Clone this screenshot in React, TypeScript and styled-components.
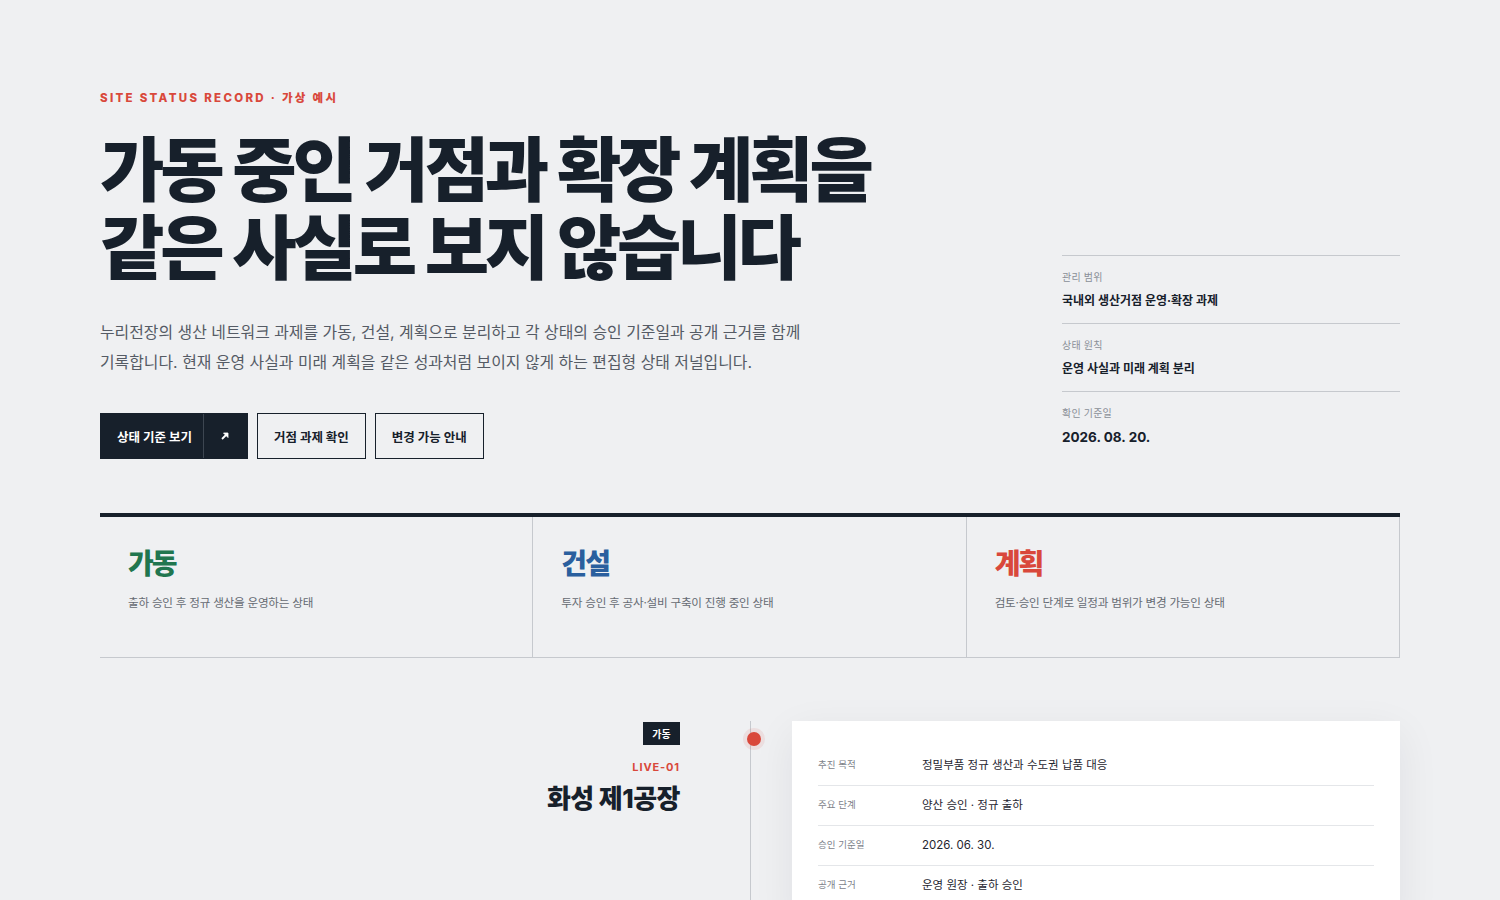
import React from 'react';
import styled, { createGlobalStyle } from 'styled-components';

const GlobalStyle = createGlobalStyle`
  * { box-sizing: border-box; }
  html, body { margin: 0; padding: 0; }
  body {
    background: #eff0f2;
    color: #17202b;
    font-family: "Inter", "Noto Sans CJK KR", sans-serif;
  }
`;

const ink = '#17202b';
const red = '#d9483b';
const sans = '"Inter", "Noto Sans CJK KR", sans-serif';

const Page = styled.main`
  width: 1300px;
  margin: 0 auto;
  padding-top: 90px;
`;

const Hero = styled.section`
  display: grid;
  grid-template-columns: 1fr 338px;
  align-items: end;
`;

const Eyebrow = styled.div`
  font-family: ${sans};
  font-size: 11.5px;
  font-weight: 800;
  letter-spacing: 0.2em;
  color: ${red};
  line-height: 16px;
`;

const Headline = styled.h1`
  margin: 21px 0 0;
  font-family: "Noto Sans CJK KR", sans-serif;
  font-size: 70px;
  font-weight: 800;
  line-height: 78px;
  letter-spacing: -0.06em;
  color: ${ink};
`;

const Lead = styled.p`
  margin: 35px 0 0;
  max-width: 712px;
  font-family: ${sans};
  font-size: 15.9px;
  line-height: 30px;
  color: #555b65;
`;

const Actions = styled.div`
  display: flex;
  gap: 9px;
  margin-top: 35px;
`;

const Button = styled.a<{ $primary?: boolean }>`
  display: inline-flex;
  align-items: center;
  height: 46px;
  padding: ${(p) => (p.$primary ? '0' : '0 16px')};
  border: 1px solid ${ink};
  background: ${(p) => (p.$primary ? ink : 'transparent')};
  color: ${(p) => (p.$primary ? '#fff' : ink)};
  font-family: ${sans};
  font-size: 12.5px;
  font-weight: 700;
  text-decoration: none;
`;

const ButtonLabel = styled.span`
  padding: 0 11px 0 16px;
`;

const ButtonArrow = styled.span`
  display: flex;
  align-items: center;
  justify-content: center;
  width: 44px;
  height: 100%;
  border-left: 1px solid #3d4651;
`;

const Meta = styled.dl`
  margin: 0 0 12px;
`;

const MetaItem = styled.div`
  border-top: 1px solid #c6c9ce;
  padding: 14px 0 12px;
  &:last-child { padding-bottom: 0; }
`;

const MetaLabel = styled.dt`
  font-family: ${sans};
  font-size: 10px;
  line-height: 14px;
  letter-spacing: 0.02em;
  color: #8a8f97;
`;

const MetaValue = styled.dd<{ $num?: boolean }>`
  margin: 7px 0 0;
  font-family: ${sans};
  font-size: ${(p) => (p.$num ? '13.5px' : '12px')};
  font-weight: 700;
  line-height: 20px;
  color: ${ink};
`;

const StatusBand = styled.section`
  display: grid;
  grid-template-columns: repeat(3, 1fr);
  margin-top: 54px;
  border-top: 4px solid ${ink};
  border-bottom: 1px solid #c6c9ce;
`;

const StatusCell = styled.div`
  height: 140px;
  padding: 28px 28px 0;
  border-right: 1px solid #c6c9ce;
`;

const StatusTitle = styled.h2<{ $color: string }>`
  margin: 0;
  font-family: "Noto Sans CJK KR", sans-serif;
  font-size: 28px;
  font-weight: 800;
  line-height: 34px;
  letter-spacing: -0.07em;
  color: ${(p) => p.$color};
`;

const StatusDesc = styled.p`
  margin: 15px 0 0;
  font-family: ${sans};
  font-size: 11.6px;
  line-height: 18px;
  color: #666b73;
  letter-spacing: -0.02em;
`;

const Timeline = styled.section`
  display: grid;
  grid-template-columns: 580px 112px 1fr;
  margin-top: 63px;
`;

const SiteHead = styled.div`
  display: flex;
  flex-direction: column;
  align-items: flex-end;
  padding-top: 1px;
`;

const Tag = styled.span`
  display: inline-flex;
  align-items: center;
  justify-content: center;
  width: 37px;
  height: 23px;
  background: ${ink};
  color: #fff;
  font-family: ${sans};
  font-size: 10px;
  font-weight: 700;
`;

const Code = styled.div`
  margin-top: 15px;
  font-family: "Inter", sans-serif;
  font-size: 11px;
  font-weight: 700;
  letter-spacing: 0.08em;
  line-height: 14px;
  color: ${red};
`;

const SiteName = styled.h3`
  margin: 8px 0 0;
  font-family: ${sans};
  font-size: 26px;
  font-weight: 800;
  line-height: 34px;
  letter-spacing: -0.02em;
  color: ${ink};
`;

const Rail = styled.div`
  position: relative;
  margin-left: 70px;
  width: 1px;
  min-height: 200px;
  background: #c6c9ce;
`;

const Dot = styled.span`
  position: absolute;
  left: -3px;
  top: 11px;
  width: 14px;
  height: 14px;
  border-radius: 50%;
  background: ${red};
  box-shadow: 0 0 0 4px rgba(217, 72, 59, 0.1);
`;

const Card = styled.div`
  background: #fff;
  padding: 25px 26px 10px;
  box-shadow: 0 12px 40px rgba(23, 32, 43, 0.07);
`;

const Row = styled.div`
  display: grid;
  grid-template-columns: 104px 1fr;
  align-items: start;
  height: 40px;
  padding-top: 12px;
  border-bottom: 1px solid #e4e6e9;
  &:last-child { border-bottom: none; }
`;

const RowLabel = styled.span`
  font-family: ${sans};
  font-size: 9.5px;
  line-height: 14px;
  color: #7d828a;
`;

const RowValue = styled.span`
  font-family: ${sans};
  font-size: 11.5px;
  line-height: 14px;
  color: #1f2630;
`;

const meta = [
  { label: '관리 범위', value: '국내외 생산거점 운영·확장 과제' },
  { label: '상태 원칙', value: '운영 사실과 미래 계획 분리' },
  { label: '확인 기준일', value: '2026. 08. 20.', num: true },
];

const statuses = [
  { title: '가동', color: '#21764f', desc: '출하 승인 후 정규 생산을 운영하는 상태' },
  { title: '건설', color: '#2a5f9e', desc: '투자 승인 후 공사·설비 구축이 진행 중인 상태' },
  { title: '계획', color: '#d9483b', desc: '검토·승인 단계로 일정과 범위가 변경 가능인 상태' },
];

const rows = [
  { label: '추진 목적', value: '정밀부품 정규 생산과 수도권 납품 대응' },
  { label: '주요 단계', value: '양산 승인 · 정규 출하' },
  { label: '승인 기준일', value: '2026. 06. 30.' },
  { label: '공개 근거', value: '운영 원장 · 출하 승인' },
];

const Arrow = () => (
  <svg width="10" height="10" viewBox="0 0 10 10" fill="none">
    <path d="M2 8L7.5 2.5" stroke="#fff" strokeWidth="1.8" />
    <path d="M3.5 2H8V6.5Z" fill="#fff" stroke="#fff" strokeWidth="0.8" />
  </svg>
);

export default function App() {
  return (
    <>
      <GlobalStyle />
      <Page>
        <Hero>
          <div>
            <Eyebrow>SITE STATUS RECORD · 가상 예시</Eyebrow>
            <Headline>
              가동 중인 거점과 확장 계획을
              <br />
              같은 사실로 보지 않습니다
            </Headline>
            <Lead>
              누리전장의 생산 네트워크 과제를 가동, 건설, 계획으로 분리하고 각 상태의 승인 기준일과 공개 근거를 함께
              기록합니다. 현재 운영 사실과 미래 계획을 같은 성과처럼 보이지 않게 하는 편집형 상태 저널입니다.
            </Lead>
            <Actions>
              <Button $primary href="#">
                <ButtonLabel>상태 기준 보기</ButtonLabel>
                <ButtonArrow>
                  <Arrow />
                </ButtonArrow>
              </Button>
              <Button href="#">거점 과제 확인</Button>
              <Button href="#">변경 가능 안내</Button>
            </Actions>
          </div>
          <Meta>
            {meta.map((m) => (
              <MetaItem key={m.label}>
                <MetaLabel>{m.label}</MetaLabel>
                <MetaValue $num={m.num}>{m.value}</MetaValue>
              </MetaItem>
            ))}
          </Meta>
        </Hero>

        <StatusBand>
          {statuses.map((s) => (
            <StatusCell key={s.title}>
              <StatusTitle $color={s.color}>{s.title}</StatusTitle>
              <StatusDesc>{s.desc}</StatusDesc>
            </StatusCell>
          ))}
        </StatusBand>

        <Timeline>
          <SiteHead>
            <Tag>가동</Tag>
            <Code>LIVE-01</Code>
            <SiteName>화성 제1공장</SiteName>
          </SiteHead>
          <div>
            <Rail>
              <Dot />
            </Rail>
          </div>
          <Card>
            {rows.map((r) => (
              <Row key={r.label}>
                <RowLabel>{r.label}</RowLabel>
                <RowValue>{r.value}</RowValue>
              </Row>
            ))}
          </Card>
        </Timeline>
      </Page>
    </>
  );
}
